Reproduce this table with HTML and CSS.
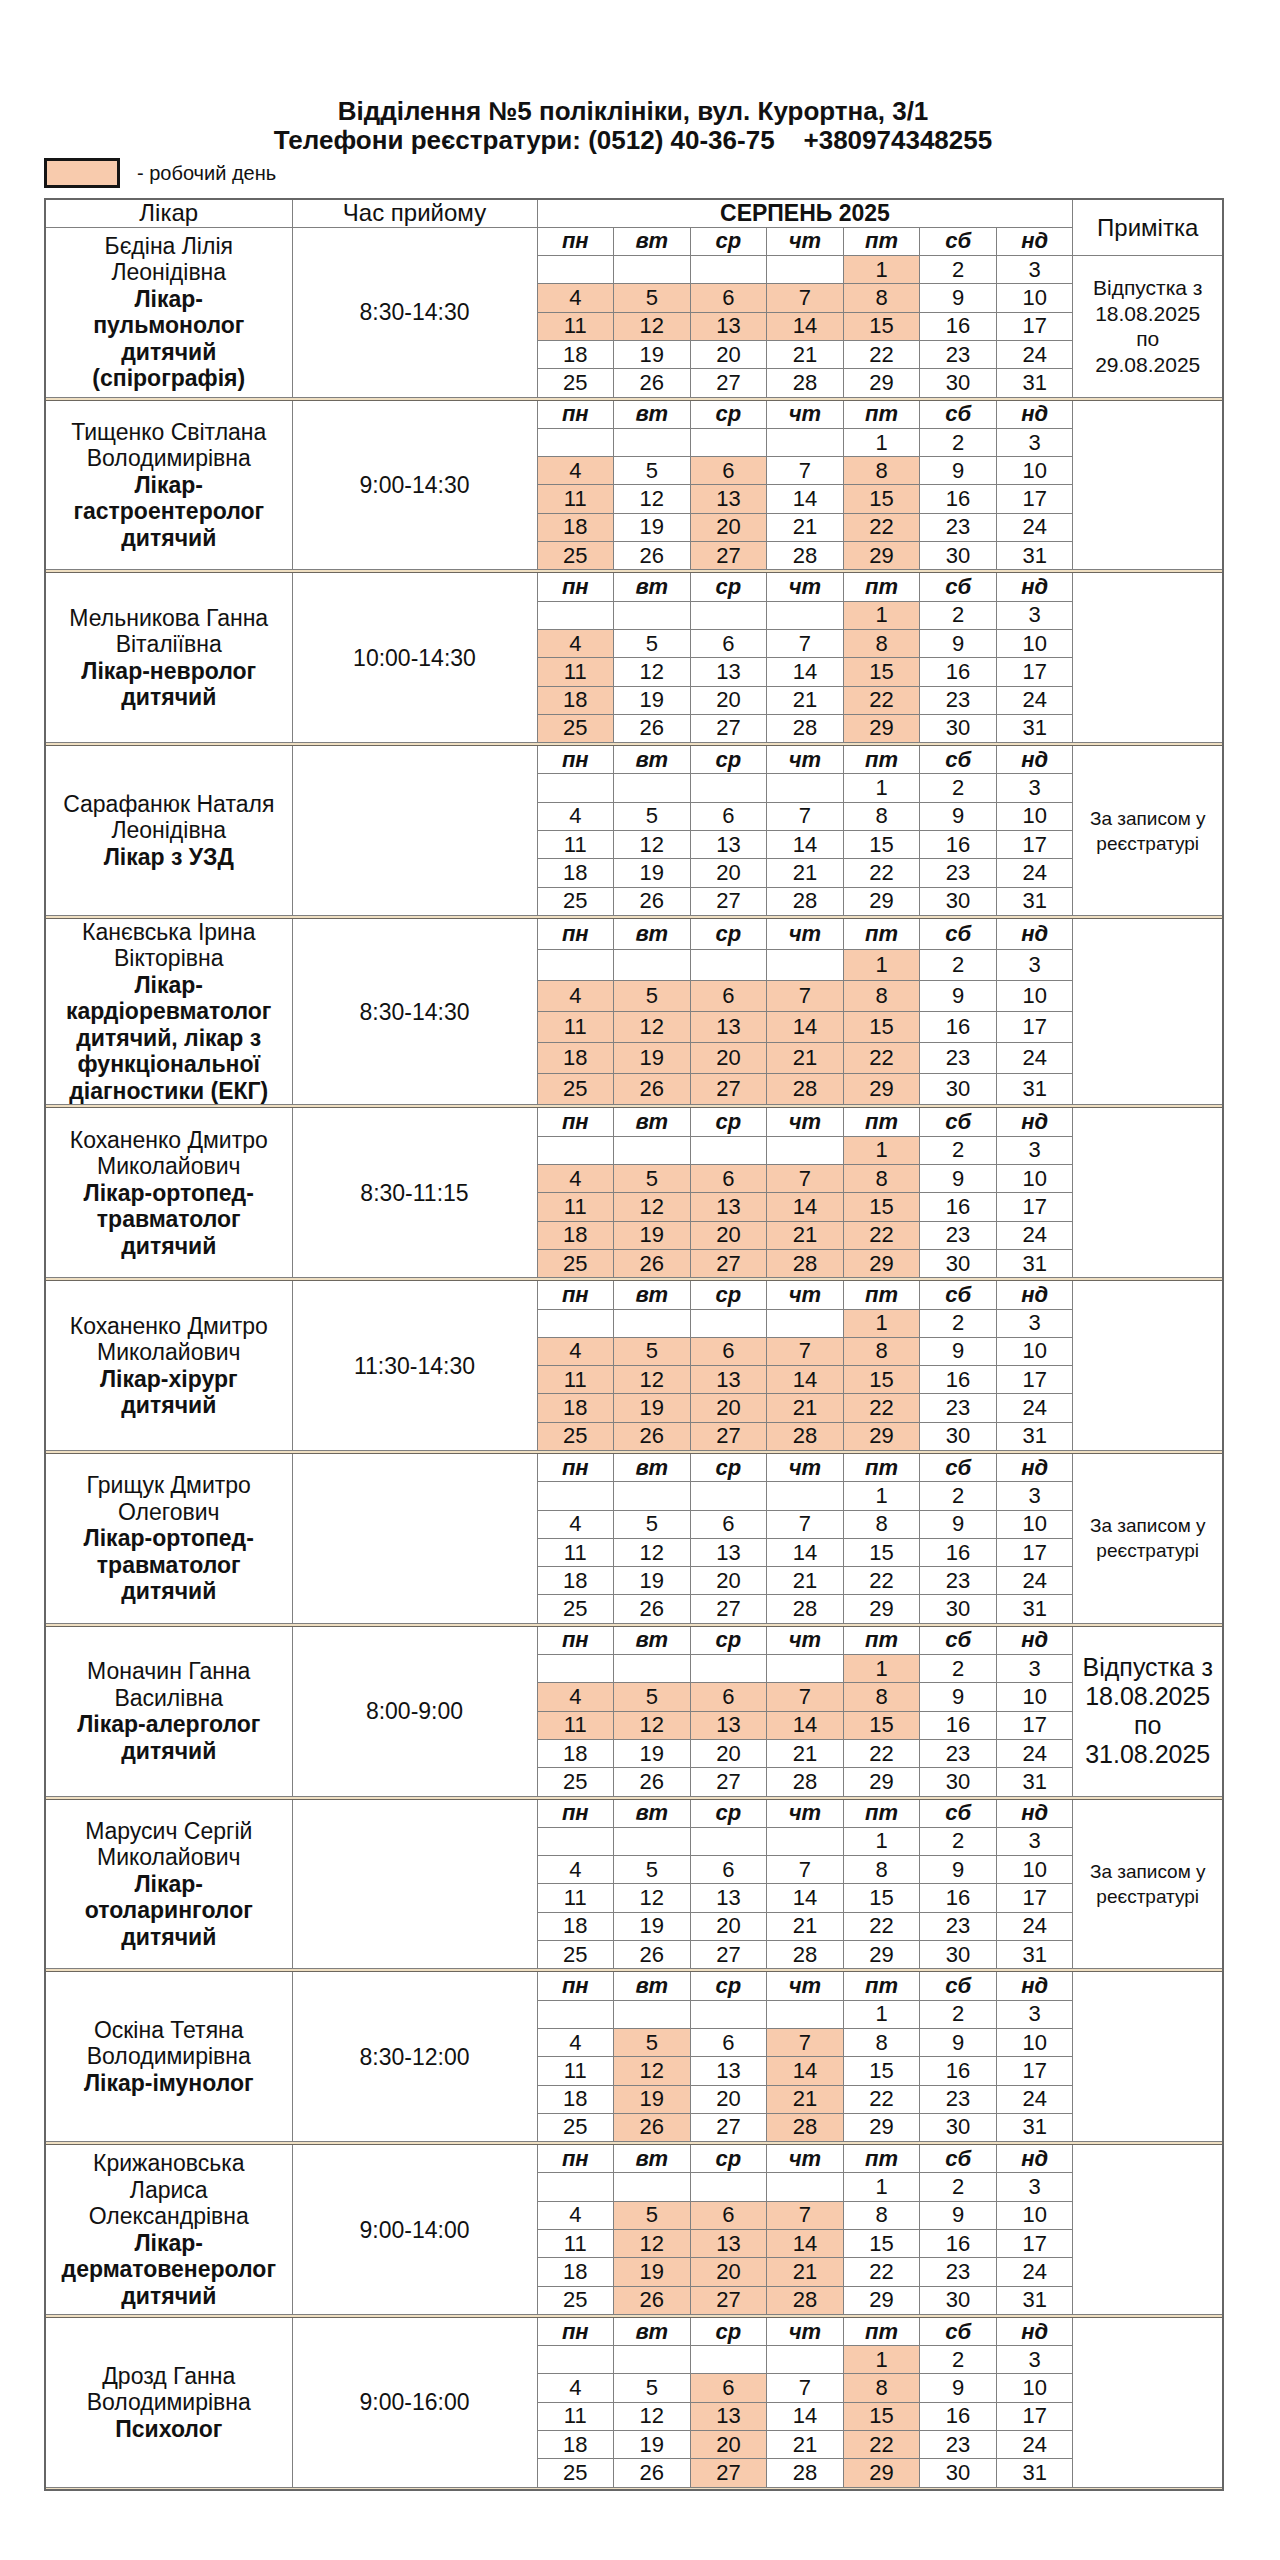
FILE: index.html
```html
<!DOCTYPE html>
<html lang="uk">
<head>
<meta charset="utf-8">
<title>Графік прийому лікарів</title>
<link rel="stylesheet" href="styles.css">
</head>
<body>
<div class="page">
  <h1 class="title">Відділення №5 поліклініки, вул. Курортна, 3/1<br><span class="phones">Телефони реєстратури: (0512) 40-36-75    +380974348255</span></h1>
  <div class="legend"><span class="swatch"></span><span class="legend-text">- робочий день</span></div>
  <table class="sched">
    <colgroup>
      <col class="c-name"><col class="c-time">
      <col class="c-day"><col class="c-day"><col class="c-day"><col class="c-day"><col class="c-day"><col class="c-day"><col class="c-day">
      <col class="c-note">
    </colgroup>
    <tbody>
      <tr class="head">
        <td>Лікар</td><td>Час прийому</td><td colspan="7" class="month">СЕРПЕНЬ 2025</td><td rowspan="2" class="note-head">Примітка</td>
      </tr>

      <!-- 1 -->
      <tr>
        <td class="name" rowspan="6">Бєдіна Лілія<br>Леонідівна<br><b>Лікар-<br>пульмонолог<br>дитячий<br>(спірографія)</b></td>
        <td class="time" rowspan="6">8:30-14:30</td>
        <th>пн</th><th>вт</th><th>ср</th><th>чт</th><th>пт</th><th>сб</th><th>нд</th>
      </tr>
      <tr><td></td><td></td><td></td><td></td><td class="w">1</td><td>2</td><td>3</td><td class="note" rowspan="5">Відпустка з<br>18.08.2025<br>по<br>29.08.2025</td></tr>
      <tr><td class="w">4</td><td class="w">5</td><td class="w">6</td><td class="w">7</td><td class="w">8</td><td>9</td><td>10</td></tr>
      <tr><td class="w">11</td><td class="w">12</td><td class="w">13</td><td class="w">14</td><td class="w">15</td><td>16</td><td>17</td></tr>
      <tr><td>18</td><td>19</td><td>20</td><td>21</td><td>22</td><td>23</td><td>24</td></tr>
      <tr><td>25</td><td>26</td><td>27</td><td>28</td><td>29</td><td>30</td><td>31</td></tr>
      <tr class="sep"><td colspan="10"></td></tr>

      <!-- 2 -->
      <tr>
        <td class="name" rowspan="6">Тищенко Світлана<br>Володимирівна<br><b>Лікар-<br>гастроентеролог<br>дитячий</b></td>
        <td class="time" rowspan="6">9:00-14:30</td>
        <th>пн</th><th>вт</th><th>ср</th><th>чт</th><th>пт</th><th>сб</th><th>нд</th>
        <td class="note" rowspan="6"></td>
      </tr>
      <tr><td></td><td></td><td></td><td></td><td>1</td><td>2</td><td>3</td></tr>
      <tr><td class="w">4</td><td>5</td><td class="w">6</td><td>7</td><td class="w">8</td><td>9</td><td>10</td></tr>
      <tr><td class="w">11</td><td>12</td><td class="w">13</td><td>14</td><td class="w">15</td><td>16</td><td>17</td></tr>
      <tr><td class="w">18</td><td>19</td><td class="w">20</td><td>21</td><td class="w">22</td><td>23</td><td>24</td></tr>
      <tr><td class="w">25</td><td>26</td><td class="w">27</td><td>28</td><td class="w">29</td><td>30</td><td>31</td></tr>
      <tr class="sep"><td colspan="10"></td></tr>

      <!-- 3 -->
      <tr>
        <td class="name" rowspan="6">Мельникова Ганна<br>Віталіївна<br><b>Лікар-невролог<br>дитячий</b></td>
        <td class="time" rowspan="6">10:00-14:30</td>
        <th>пн</th><th>вт</th><th>ср</th><th>чт</th><th>пт</th><th>сб</th><th>нд</th>
        <td class="note" rowspan="6"></td>
      </tr>
      <tr><td></td><td></td><td></td><td></td><td class="w">1</td><td>2</td><td>3</td></tr>
      <tr><td class="w">4</td><td>5</td><td>6</td><td>7</td><td class="w">8</td><td>9</td><td>10</td></tr>
      <tr><td class="w">11</td><td>12</td><td>13</td><td>14</td><td class="w">15</td><td>16</td><td>17</td></tr>
      <tr><td class="w">18</td><td>19</td><td>20</td><td>21</td><td class="w">22</td><td>23</td><td>24</td></tr>
      <tr><td class="w">25</td><td>26</td><td>27</td><td>28</td><td class="w">29</td><td>30</td><td>31</td></tr>
      <tr class="sep"><td colspan="10"></td></tr>

      <!-- 4 -->
      <tr>
        <td class="name" rowspan="6">Сарафанюк Наталя<br>Леонідівна<br><b>Лікар з УЗД</b></td>
        <td class="time" rowspan="6"></td>
        <th>пн</th><th>вт</th><th>ср</th><th>чт</th><th>пт</th><th>сб</th><th>нд</th>
        <td class="note small" rowspan="6">За записом у<br>реєстратурі</td>
      </tr>
      <tr><td></td><td></td><td></td><td></td><td>1</td><td>2</td><td>3</td></tr>
      <tr><td>4</td><td>5</td><td>6</td><td>7</td><td>8</td><td>9</td><td>10</td></tr>
      <tr><td>11</td><td>12</td><td>13</td><td>14</td><td>15</td><td>16</td><td>17</td></tr>
      <tr><td>18</td><td>19</td><td>20</td><td>21</td><td>22</td><td>23</td><td>24</td></tr>
      <tr><td>25</td><td>26</td><td>27</td><td>28</td><td>29</td><td>30</td><td>31</td></tr>
      <tr class="sep"><td colspan="10"></td></tr>

      <!-- 5 -->
      <tr>
        <td class="name" rowspan="6">Канєвська Ірина<br>Вікторівна<br><b>Лікар-<br>кардіоревматолог<br>дитячий, лікар з<br>функціональної<br>діагностики (ЕКГ)</b></td>
        <td class="time" rowspan="6">8:30-14:30</td>
        <th>пн</th><th>вт</th><th>ср</th><th>чт</th><th>пт</th><th>сб</th><th>нд</th>
        <td class="note" rowspan="6"></td>
      </tr>
      <tr><td></td><td></td><td></td><td></td><td class="w">1</td><td>2</td><td>3</td></tr>
      <tr><td class="w">4</td><td class="w">5</td><td class="w">6</td><td class="w">7</td><td class="w">8</td><td>9</td><td>10</td></tr>
      <tr><td class="w">11</td><td class="w">12</td><td class="w">13</td><td class="w">14</td><td class="w">15</td><td>16</td><td>17</td></tr>
      <tr><td class="w">18</td><td class="w">19</td><td class="w">20</td><td class="w">21</td><td class="w">22</td><td>23</td><td>24</td></tr>
      <tr><td class="w">25</td><td class="w">26</td><td class="w">27</td><td class="w">28</td><td class="w">29</td><td>30</td><td>31</td></tr>
      <tr class="sep"><td colspan="10"></td></tr>

      <!-- 6 -->
      <tr>
        <td class="name" rowspan="6">Коханенко Дмитро<br>Миколайович<br><b>Лікар-ортопед-<br>травматолог<br>дитячий</b></td>
        <td class="time" rowspan="6">8:30-11:15</td>
        <th>пн</th><th>вт</th><th>ср</th><th>чт</th><th>пт</th><th>сб</th><th>нд</th>
        <td class="note" rowspan="6"></td>
      </tr>
      <tr><td></td><td></td><td></td><td></td><td class="w">1</td><td>2</td><td>3</td></tr>
      <tr><td class="w">4</td><td class="w">5</td><td class="w">6</td><td class="w">7</td><td class="w">8</td><td>9</td><td>10</td></tr>
      <tr><td class="w">11</td><td class="w">12</td><td class="w">13</td><td class="w">14</td><td class="w">15</td><td>16</td><td>17</td></tr>
      <tr><td class="w">18</td><td class="w">19</td><td class="w">20</td><td class="w">21</td><td class="w">22</td><td>23</td><td>24</td></tr>
      <tr><td class="w">25</td><td class="w">26</td><td class="w">27</td><td class="w">28</td><td class="w">29</td><td>30</td><td>31</td></tr>
      <tr class="sep"><td colspan="10"></td></tr>

      <!-- 7 -->
      <tr>
        <td class="name" rowspan="6">Коханенко Дмитро<br>Миколайович<br><b>Лікар-хірург<br>дитячий</b></td>
        <td class="time" rowspan="6">11:30-14:30</td>
        <th>пн</th><th>вт</th><th>ср</th><th>чт</th><th>пт</th><th>сб</th><th>нд</th>
        <td class="note" rowspan="6"></td>
      </tr>
      <tr><td></td><td></td><td></td><td></td><td class="w">1</td><td>2</td><td>3</td></tr>
      <tr><td class="w">4</td><td class="w">5</td><td class="w">6</td><td class="w">7</td><td class="w">8</td><td>9</td><td>10</td></tr>
      <tr><td class="w">11</td><td class="w">12</td><td class="w">13</td><td class="w">14</td><td class="w">15</td><td>16</td><td>17</td></tr>
      <tr><td class="w">18</td><td class="w">19</td><td class="w">20</td><td class="w">21</td><td class="w">22</td><td>23</td><td>24</td></tr>
      <tr><td class="w">25</td><td class="w">26</td><td class="w">27</td><td class="w">28</td><td class="w">29</td><td>30</td><td>31</td></tr>
      <tr class="sep"><td colspan="10"></td></tr>

      <!-- 8 -->
      <tr>
        <td class="name" rowspan="6">Грищук Дмитро<br>Олегович<br><b>Лікар-ортопед-<br>травматолог<br>дитячий</b></td>
        <td class="time" rowspan="6"></td>
        <th>пн</th><th>вт</th><th>ср</th><th>чт</th><th>пт</th><th>сб</th><th>нд</th>
        <td class="note small" rowspan="6">За записом у<br>реєстратурі</td>
      </tr>
      <tr><td></td><td></td><td></td><td></td><td>1</td><td>2</td><td>3</td></tr>
      <tr><td>4</td><td>5</td><td>6</td><td>7</td><td>8</td><td>9</td><td>10</td></tr>
      <tr><td>11</td><td>12</td><td>13</td><td>14</td><td>15</td><td>16</td><td>17</td></tr>
      <tr><td>18</td><td>19</td><td>20</td><td>21</td><td>22</td><td>23</td><td>24</td></tr>
      <tr><td>25</td><td>26</td><td>27</td><td>28</td><td>29</td><td>30</td><td>31</td></tr>
      <tr class="sep"><td colspan="10"></td></tr>

      <!-- 9 -->
      <tr>
        <td class="name" rowspan="6">Моначин Ганна<br>Василівна<br><b>Лікар-алерголог<br>дитячий</b></td>
        <td class="time" rowspan="6">8:00-9:00</td>
        <th>пн</th><th>вт</th><th>ср</th><th>чт</th><th>пт</th><th>сб</th><th>нд</th>
        <td class="note big" rowspan="6">Відпустка з<br>18.08.2025<br>по<br>31.08.2025</td>
      </tr>
      <tr><td></td><td></td><td></td><td></td><td class="w">1</td><td>2</td><td>3</td></tr>
      <tr><td class="w">4</td><td class="w">5</td><td class="w">6</td><td class="w">7</td><td class="w">8</td><td>9</td><td>10</td></tr>
      <tr><td class="w">11</td><td class="w">12</td><td class="w">13</td><td class="w">14</td><td class="w">15</td><td>16</td><td>17</td></tr>
      <tr><td>18</td><td>19</td><td>20</td><td>21</td><td>22</td><td>23</td><td>24</td></tr>
      <tr><td>25</td><td>26</td><td>27</td><td>28</td><td>29</td><td>30</td><td>31</td></tr>
      <tr class="sep"><td colspan="10"></td></tr>

      <!-- 10 -->
      <tr>
        <td class="name" rowspan="6">Марусич Сергій<br>Миколайович<br><b>Лікар-<br>отоларинголог<br>дитячий</b></td>
        <td class="time" rowspan="6"></td>
        <th>пн</th><th>вт</th><th>ср</th><th>чт</th><th>пт</th><th>сб</th><th>нд</th>
        <td class="note small" rowspan="6">За записом у<br>реєстратурі</td>
      </tr>
      <tr><td></td><td></td><td></td><td></td><td>1</td><td>2</td><td>3</td></tr>
      <tr><td>4</td><td>5</td><td>6</td><td>7</td><td>8</td><td>9</td><td>10</td></tr>
      <tr><td>11</td><td>12</td><td>13</td><td>14</td><td>15</td><td>16</td><td>17</td></tr>
      <tr><td>18</td><td>19</td><td>20</td><td>21</td><td>22</td><td>23</td><td>24</td></tr>
      <tr><td>25</td><td>26</td><td>27</td><td>28</td><td>29</td><td>30</td><td>31</td></tr>
      <tr class="sep"><td colspan="10"></td></tr>

      <!-- 11 -->
      <tr>
        <td class="name" rowspan="6">Оскіна Тетяна<br>Володимирівна<br><b>Лікар-імунолог</b></td>
        <td class="time" rowspan="6">8:30-12:00</td>
        <th>пн</th><th>вт</th><th>ср</th><th>чт</th><th>пт</th><th>сб</th><th>нд</th>
        <td class="note" rowspan="6"></td>
      </tr>
      <tr><td></td><td></td><td></td><td></td><td>1</td><td>2</td><td>3</td></tr>
      <tr><td>4</td><td class="w">5</td><td>6</td><td class="w">7</td><td>8</td><td>9</td><td>10</td></tr>
      <tr><td>11</td><td class="w">12</td><td>13</td><td class="w">14</td><td>15</td><td>16</td><td>17</td></tr>
      <tr><td>18</td><td class="w">19</td><td>20</td><td class="w">21</td><td>22</td><td>23</td><td>24</td></tr>
      <tr><td>25</td><td class="w">26</td><td>27</td><td class="w">28</td><td>29</td><td>30</td><td>31</td></tr>
      <tr class="sep"><td colspan="10"></td></tr>

      <!-- 12 -->
      <tr>
        <td class="name" rowspan="6">Крижановська<br>Лариса<br>Олександрівна<br><b>Лікар-<br>дерматовенеролог<br>дитячий</b></td>
        <td class="time" rowspan="6">9:00-14:00</td>
        <th>пн</th><th>вт</th><th>ср</th><th>чт</th><th>пт</th><th>сб</th><th>нд</th>
        <td class="note" rowspan="6"></td>
      </tr>
      <tr><td></td><td></td><td></td><td></td><td>1</td><td>2</td><td>3</td></tr>
      <tr><td>4</td><td class="w">5</td><td class="w">6</td><td class="w">7</td><td>8</td><td>9</td><td>10</td></tr>
      <tr><td>11</td><td class="w">12</td><td class="w">13</td><td class="w">14</td><td>15</td><td>16</td><td>17</td></tr>
      <tr><td>18</td><td class="w">19</td><td class="w">20</td><td class="w">21</td><td>22</td><td>23</td><td>24</td></tr>
      <tr><td>25</td><td class="w">26</td><td class="w">27</td><td class="w">28</td><td>29</td><td>30</td><td>31</td></tr>
      <tr class="sep"><td colspan="10"></td></tr>

      <!-- 13 -->
      <tr>
        <td class="name" rowspan="6">Дрозд Ганна<br>Володимирівна<br><b>Психолог</b></td>
        <td class="time" rowspan="6">9:00-16:00</td>
        <th>пн</th><th>вт</th><th>ср</th><th>чт</th><th>пт</th><th>сб</th><th>нд</th>
        <td class="note" rowspan="6"></td>
      </tr>
      <tr><td></td><td></td><td></td><td></td><td class="w">1</td><td>2</td><td>3</td></tr>
      <tr><td>4</td><td>5</td><td class="w">6</td><td>7</td><td class="w">8</td><td>9</td><td>10</td></tr>
      <tr><td>11</td><td>12</td><td class="w">13</td><td>14</td><td class="w">15</td><td>16</td><td>17</td></tr>
      <tr><td>18</td><td>19</td><td class="w">20</td><td>21</td><td class="w">22</td><td>23</td><td>24</td></tr>
      <tr><td>25</td><td>26</td><td class="w">27</td><td>28</td><td class="w">29</td><td>30</td><td>31</td></tr>
      <tr class="sep"><td colspan="10"></td></tr>
    </tbody>
  </table>
</div>
</body>
</html>
```

FILE: styles.css
```css
* { box-sizing: border-box; }

body {
  margin: 0;
  background: #ffffff;
  color: #111111;
  font-family: "Liberation Sans", Arial, sans-serif;
}

.page {
  width: 1280px;
  padding: 97px 0 60px 44px;
}

.title {
  margin: 0;
  width: 1178px;
  text-align: center;
  font-size: 26px;
  line-height: 29px;
  font-weight: bold;
  color: #111;
}

.phones { white-space: pre; }

.legend {
  display: flex;
  align-items: flex-end;
  gap: 17px;
  margin-top: 3px;
  height: 30px;
}

.swatch {
  width: 76px;
  height: 30px;
  background: #f8cbad;
  border: 3px solid #151515;
}

.legend-text {
  font-size: 20px;
  line-height: 20px;
  padding-bottom: 5px;
}

.sched {
  margin-top: 10px;
  width: 1178px;
  table-layout: fixed;
  border-collapse: collapse;
  border: 2px solid #666666;
}

.c-name { width: 247px; }
.c-time { width: 245px; }
.c-day { width: 76.57px; }
.c-note { width: 150px; }

.sched td,
.sched th {
  border: 1px solid #808080;
  padding: 0;
  height: 28.3px;
  text-align: center;
  vertical-align: middle;
  font-size: 22px;
  line-height: 24px;
  font-weight: normal;
  color: #111;
}

.sched th {
  font-weight: bold;
  font-style: italic;
  font-size: 22px;
}

.sched .head td {
  font-size: 24px;
}

.sched .head .month {
  font-weight: bold;
  font-size: 23px;
}

.sched .note-head {
  font-size: 24px;
}

.sched td.w { background: #f8cbad; }

.sched td.name {
  font-size: 23px;
  line-height: 26.5px;
  padding: 0 3px;
}

.sched td.name b { font-weight: bold; }

.sched td.time {
  font-size: 23px;
}

.sched td.note {
  font-size: 21px;
  line-height: 25.5px;
}

.sched td.note.small {
  font-size: 19px;
  line-height: 25px;
}

.sched td.note.big {
  font-size: 25px;
  line-height: 29px;
}

.sched tr.sep td {
  height: 3px;
  padding: 0;
  background: #efdfc2;
  border-top: 1px solid #6d675e;
  border-bottom: 1px solid #6d675e;
  border-left: 0;
  border-right: 0;
  line-height: 0;
  font-size: 0;
}
```
